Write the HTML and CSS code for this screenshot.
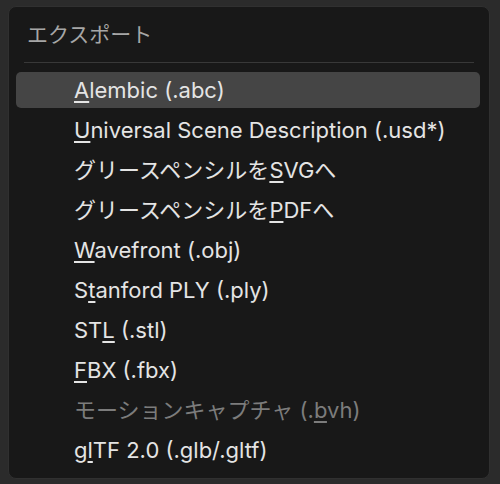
FILE: index.html
```html
<!DOCTYPE html>
<html>

<head>
  <title>エクスポート</title>
  <link rel="stylesheet" href="styles.css">
</head>

<body>
  <div class="backdrop">
    <div class="popup">
      <div class="popup-title">エクスポート</div>
      <div class="separator"></div>
      <ul class="menu">
        <li class="menu-item active"><u>A</u>lembic (.abc)</li>
        <li class="menu-item"><u>U</u>niversal Scene Description (.usd*)</li>
        <li class="menu-item">グリースペンシルを<u>S</u>VGへ</li>
        <li class="menu-item">グリースペンシルを<u>P</u>DFへ</li>
        <li class="menu-item"><u>W</u>avefront (.obj)</li>
        <li class="menu-item">S<u>t</u>anford PLY (.ply)</li>
        <li class="menu-item">ST<u>L</u> (.stl)</li>
        <li class="menu-item"><u>F</u>BX (.fbx)</li>
        <li class="menu-item disabled">モーションキャプチャ (.<u>b</u>vh)</li>
        <li class="menu-item">g<u>l</u>TF 2.0 (.glb/.gltf)</li>
      </ul>
    </div>
  </div>
</body>

</html>
```

FILE: styles.css
```css
html, body {
  margin: 0;
  padding: 0;
}

body {
  width: 500px;
  height: 484px;
  overflow: hidden;
  background-color: #2b2b2b;
  font-family: Inter, "Noto Sans CJK JP", sans-serif;
}

.backdrop {
  padding: 6px 0 0 8px;
}

/* popup menu */
.popup {
  box-sizing: border-box;
  width: 482px;
  height: 473px;
  padding: 15px 9px 0 7px;
  background-color: #181818;
  border: 1px solid #303030;
  border-radius: 8px;
}

.popup-title {
  padding-left: 11px;
  font-size: 21px;
  line-height: 26px;
  color: #a6a6a6;
}

.separator {
  height: 1px;
  margin: 14px 6px 0 8px;
  background-color: #383838;
}

.menu {
  list-style-type: none;
  margin: 9px 0 0 0;
  padding: 0;
}

.menu-item {
  height: 36px;
  margin-bottom: 4px;
  padding-left: 58px;
  line-height: 36px;
  font-size: 22px;
  color: #e4e4e4;
  border-radius: 5px;
  white-space: nowrap;
}

.menu-item.active {
  background-color: #454545;
}

.menu-item.disabled {
  color: #7c7c7c;
}

.menu-item u {
  text-decoration-thickness: 2px;
  text-underline-offset: 3px;
}
```
